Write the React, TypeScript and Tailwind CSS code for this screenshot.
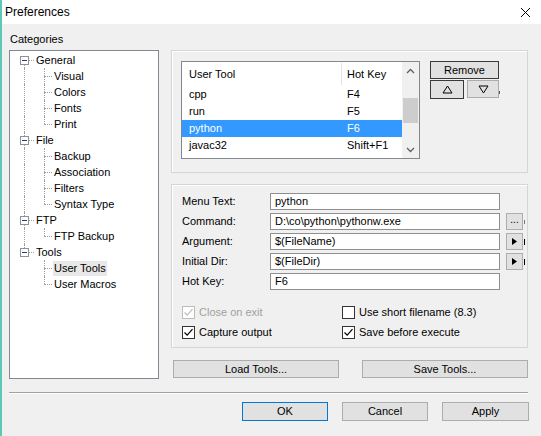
import React from 'react';

type TreeNode = { label: string; children: string[] };

const TREE: TreeNode[] = [
  { label: 'General', children: ['Visual', 'Colors', 'Fonts', 'Print'] },
  { label: 'File', children: ['Backup', 'Association', 'Filters', 'Syntax Type'] },
  { label: 'FTP', children: ['FTP Backup'] },
  { label: 'Tools', children: ['User Tools', 'User Macros'] },
];

const TOOLS = [
  { name: 'cpp', key: 'F4' },
  { name: 'run', key: 'F5' },
  { name: 'python', key: 'F6', selected: true },
  { name: 'javac32', key: 'Shift+F1' },
];

const FIELDS = [
  { label: 'Menu Text:', value: 'python', side: null },
  { label: 'Command:', value: 'D:\\co\\python\\pythonw.exe', side: 'dots' },
  { label: 'Argument:', value: '$(FileName)', side: 'arrow' },
  { label: 'Initial Dir:', value: '$(FileDir)', side: 'arrow' },
  { label: 'Hot Key:', value: 'F6', side: null },
];

const MinusBox = () => (
  <span className="absolute left-[4px] top-[4px] flex h-[9px] w-[9px] items-center justify-center border border-[#919191] bg-white">
    <span className="h-px w-[5px] bg-[#1c3e8c]" />
  </span>
);

const TreeRow = ({
  text,
  isRoot,
  rootLine,
  childLine,
  selected,
}: {
  text: string;
  isRoot: boolean;
  rootLine: 'top' | 'bottom' | 'full' | 'none';
  childLine?: 'full' | 'top';
  selected?: boolean;
}) => (
  <div className="flex h-[16px] items-center">
    <div className="relative h-full w-[16px] shrink-0">
      {rootLine !== 'none' && (
        <span
          className={
            rootLine === 'full'
              ? 'absolute left-[8px] top-0 h-[16px] border-l border-dotted border-[#a0a0a0]'
              : rootLine === 'top'
                ? 'absolute left-[8px] top-0 h-[8px] border-l border-dotted border-[#a0a0a0]'
                : 'absolute left-[8px] top-[8px] h-[8px] border-l border-dotted border-[#a0a0a0]'
          }
        />
      )}
      {isRoot && (
        <>
          <span className="absolute left-[13px] top-[8px] w-[5px] border-t border-dotted border-[#a0a0a0]" />
          <MinusBox />
        </>
      )}
    </div>
    {isRoot ? (
      <span className="ml-[4px] leading-none">{text}</span>
    ) : (
      <>
        <div className="relative h-full w-[20px] shrink-0">
          <span
            className={
              childLine === 'full'
                ? 'absolute left-[12px] top-0 h-[16px] border-l border-dotted border-[#a0a0a0]'
                : 'absolute left-[12px] top-0 h-[8px] border-l border-dotted border-[#a0a0a0]'
            }
          />
          <span className="absolute left-[12px] top-[8px] w-[8px] border-t border-dotted border-[#a0a0a0]" />
        </div>
        <span className={selected ? 'ml-[1px] bg-[#e8e8e8] px-[1px] leading-[15px]' : 'ml-[2px] leading-none'}>
          {text}
        </span>
      </>
    )}
  </div>
);

const Tree = () => {
  const rows: React.ReactNode[] = [];
  TREE.forEach((node, i) => {
    const first = i === 0;
    const last = i === TREE.length - 1;
    rows.push(
      <TreeRow
        key={node.label}
        text={node.label}
        isRoot
        rootLine={first ? 'bottom' : last ? 'top' : 'full'}
      />
    );
    node.children.forEach((child, j) => {
      rows.push(
        <TreeRow
          key={child}
          text={child}
          isRoot={false}
          rootLine={last ? 'none' : 'full'}
          childLine={j === node.children.length - 1 ? 'top' : 'full'}
          selected={child === 'User Tools'}
        />
      );
    });
  });
  return (
    <div className="h-[329px] w-[150px] border border-[#828790] bg-white pl-[6px] pt-[1px]">{rows}</div>
  );
};

const Chevron = ({ up }: { up?: boolean }) => (
  <svg width="9" height="6" viewBox="0 0 9 6">
    <path
      d={up ? 'M1 5 L4.5 1.5 L8 5' : 'M1 1 L4.5 4.5 L8 1'}
      fill="none"
      stroke="#606060"
      strokeWidth="1.3"
    />
  </svg>
);

const Triangle = ({ down }: { down?: boolean }) => (
  <svg width="11" height="9" viewBox="0 0 11 9">
    <path
      d={down ? 'M1 1 L10 1 L5.5 8 Z' : 'M1 8 L10 8 L5.5 1 Z'}
      fill="none"
      stroke="#000"
      strokeWidth="1"
    />
  </svg>
);

const CheckMark = ({ color }: { color: string }) => (
  <svg width="11" height="11" viewBox="0 0 11 11">
    <path d="M1.5 5.5 L4.2 8.2 L9.5 2.2" fill="none" stroke={color} strokeWidth="1.2" />
  </svg>
);

const Checkbox = ({
  label,
  checked,
  disabled,
}: {
  label: string;
  checked?: boolean;
  disabled?: boolean;
}) => (
  <div className="flex h-[13px] items-center gap-[4px]">
    <span
      className={
        disabled
          ? 'flex h-[13px] w-[13px] items-center justify-center border border-[#bcbcbc] bg-white'
          : 'flex h-[13px] w-[13px] items-center justify-center border border-[#333333] bg-white'
      }
    >
      {checked && <CheckMark color={disabled ? '#bcbcbc' : '#000'} />}
    </span>
    <span className={disabled ? 'text-[#a0a0a0]' : ''}>{label}</span>
  </div>
);

const ToolList = () => (
  <div className="flex h-[98px] w-[239px] border border-[#828790] bg-white">
    <div className="flex w-[220px] flex-col">
      <div className="flex h-[24px] items-center">
        <div className="flex h-full w-[159px] items-center pl-[7px]">User Tool</div>
        <div className="h-[22px] w-px bg-[#e5e5e5]" />
        <div className="pl-[5px]">Hot Key</div>
      </div>
      {TOOLS.map((t) => (
        <div
          key={t.name}
          className={
            t.selected
              ? 'flex h-[17px] items-center bg-[#3399ff] text-white'
              : 'flex h-[17px] items-center'
          }
        >
          <div className="w-[160px] pl-[7px]">{t.name}</div>
          <div className="pl-[5px]">{t.key}</div>
        </div>
      ))}
    </div>
    <div className="flex w-[17px] flex-col items-center bg-[#f0f0f0]">
      <div className="flex h-[17px] w-full items-center justify-center">
        <Chevron up />
      </div>
      <div className="mt-[19px] h-[25px] w-[15px] bg-[#cdcdcd]" />
      <div className="mt-auto flex h-[17px] w-full items-center justify-center">
        <Chevron />
      </div>
    </div>
  </div>
);

const SideButton = ({ kind }: { kind: string }) => (
  <div className="flex items-center">
    <div className="flex h-[17px] w-[17px] items-center justify-center border border-[#adadad] bg-[#e1e1e1]">
      {kind === 'dots' ? (
        <span className="mt-[-4px] text-[10px] leading-none">...</span>
      ) : (
        <svg width="5" height="7" viewBox="0 0 5 7">
          <path d="M0 0 L5 3.5 L0 7 Z" fill="#000" />
        </svg>
      )}
    </div>
    <span className={kind === 'dots' ? 'ml-[1px] h-[4px] w-px bg-[#7a7a7a]' : 'ml-[1px] h-[6px] w-px bg-[#000]'} />
  </div>
);

const WinButton = ({ label, className }: { label: string; className: string }) => (
  <div className={`flex items-center justify-center border bg-[#e1e1e1] ${className}`}>{label}</div>
);

const App = () => (
  <div className="relative h-[436px] w-[541px] overflow-hidden border-l-2 border-[#5fc7b5] bg-[#f0f0f0] font-['Liberation_Sans',Arial,sans-serif] text-[11px] text-black">
    <div className="flex h-[24px] items-center justify-between bg-white pl-[3px] pr-[10px]">
      <span className="text-[12px]">Preferences</span>
      <svg width="11" height="11" viewBox="0 0 11 11">
        <path d="M1 1 L10 10 M10 1 L1 10" stroke="#000" strokeWidth="1" />
      </svg>
    </div>

    <div className="flex gap-[12px] pl-[7px] pt-[9px]">
      <div className="flex flex-col">
        <div className="h-[17px] pl-[1px] leading-[13px]">Categories</div>
        <Tree />
      </div>

      <div className="flex w-[357px] flex-col pt-[17px]">
        <div className="flex h-[123px] gap-[10px] border border-[#d5d5d5] pl-[9px] pt-[10px] shadow-[inset_1px_1px_0_#ffffff]">
          <ToolList />
          <div className="flex flex-col gap-[1px]">
            <WinButton label="Remove" className="h-[18px] w-[69px] border-[#3a3a3a]" />
            <div className="flex items-start gap-[3px]">
              <div className="flex h-[19px] w-[34px] items-center justify-center border border-[#3a3a3a] bg-[#e1e1e1]">
                <Triangle />
              </div>
              <div className="flex h-[18px] w-[32px] items-center justify-center border border-[#adadad] bg-[#e1e1e1]">
                <Triangle down />
              </div>
              <span className="ml-[-3px] mt-[11px] h-[3px] w-px bg-[#555]" />
            </div>
          </div>
        </div>

        <div className="mt-[11px] flex h-[164px] flex-col border border-[#d5d5d5] pl-[10px] pt-[8px] shadow-[inset_1px_1px_0_#ffffff]">
          <div className="flex flex-col gap-[3px]">
            {FIELDS.map((f) => (
              <div key={f.label} className="flex h-[17px] items-center">
                <div className="w-[88px]">{f.label}</div>
                <div className="flex h-[17px] w-[230px] items-center border border-[#8f8f8f] bg-white pl-[4px]">
                  {f.value}
                </div>
                {f.side && (
                  <div className="ml-[6px]">
                    <SideButton kind={f.side} />
                  </div>
                )}
              </div>
            ))}
          </div>
          <div className="mt-[16px] grid grid-cols-[160px_1fr] gap-y-[7px]">
            <Checkbox label="Close on exit" checked disabled />
            <Checkbox label="Use short filename (8.3)" />
            <Checkbox label="Capture output" checked />
            <Checkbox label="Save before execute" checked />
          </div>
        </div>

        <div className="mt-[12px] flex justify-between pl-[2px]">
          <WinButton label="Load Tools..." className="h-[18px] w-[166px] border-[#adadad]" />
          <WinButton label="Save Tools..." className="h-[18px] w-[166px] border-[#adadad]" />
        </div>
      </div>
    </div>

    <div className="ml-[7px] mt-[13px] flex w-[519px] flex-col">
      <div className="h-px bg-[#a0a0a0]" />
      <div className="h-px bg-white" />
    </div>

    <div className="ml-[240px] mt-[8px] flex gap-[14px]">
      <WinButton label="OK" className="h-[19px] w-[86px] border-[#0078d7]" />
      <WinButton label="Cancel" className="h-[19px] w-[86px] border-[#adadad]" />
      <WinButton label="Apply" className="h-[19px] w-[87px] border-[#adadad]" />
    </div>
  </div>
);

export default App;
